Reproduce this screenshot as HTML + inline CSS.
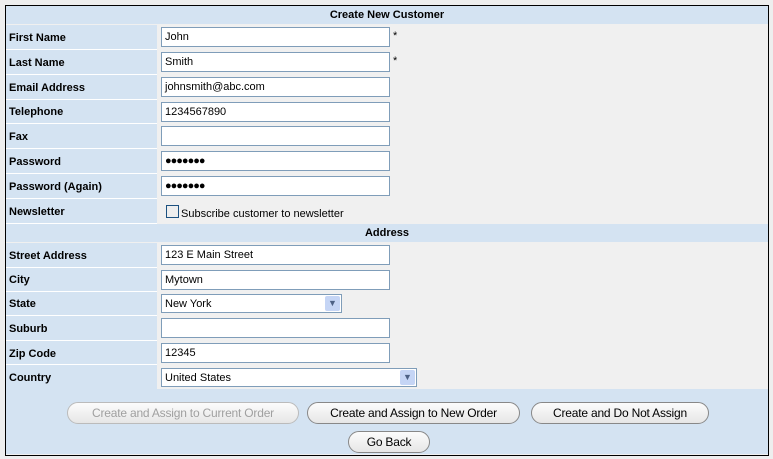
<!DOCTYPE html><html><head><style>
body{margin:0;width:773px;height:459px;background:#eeeeee;font-family:"Liberation Sans",sans-serif;font-size:11px;position:relative;overflow:hidden}
.box{position:absolute;left:5px;top:5px;width:762px;height:449px;border:1px solid #000;background:#f0f0f0}
.h{position:absolute;left:6px;width:762px;background:#d4e3f2;text-align:center;font-weight:bold;height:18px;line-height:19px}
.l{position:absolute;left:6px;width:151px;background:#d4e3f2;font-weight:bold;padding-left:3px;padding-top:1px;box-sizing:border-box;border-bottom:1px solid #fff}
.i{position:absolute;left:161px;width:229px;height:20px;border:1px solid #7f9db9;background:#fff;box-sizing:border-box;padding-left:3px;line-height:19px}
.s{position:absolute;left:161px;border:1px solid #7f9db9;background:#fff;box-sizing:border-box;padding-left:3px;height:19px;line-height:18px}
.ar{position:absolute;right:1px;top:1px;width:15px;height:15px;background:#c5d5f5;border-radius:2px;color:#4d6185;font-size:9px;text-align:center;line-height:15px}
.st{position:absolute;left:393px}
.btn{position:absolute;height:22px;border:1px solid #888;border-radius:11px;background:linear-gradient(#fcfcfc,#e6e6e6);font-size:12px;text-align:center;line-height:21px;box-sizing:border-box;color:#000;letter-spacing:-0.2px}
</style></head><body>
<div class="box"></div>
<div class="h" style="top:6px">Create New Customer</div>
<div class="l" style="top:25px;height:25px;line-height:24px">First Name</div>
<div class="l" style="top:50px;height:25px;line-height:24px">Last Name</div>
<div class="l" style="top:75px;height:25px;line-height:24px">Email Address</div>
<div class="l" style="top:100px;height:24px;line-height:23px">Telephone</div>
<div class="l" style="top:124px;height:25px;line-height:24px">Fax</div>
<div class="l" style="top:149px;height:25px;line-height:24px">Password</div>
<div class="l" style="top:174px;height:25px;line-height:24px">Password (Again)</div>
<div class="l" style="top:199px;height:25px;line-height:24px">Newsletter</div>
<div class="i" style="top:27px">John</div><div class="st" style="top:30px">*</div>
<div class="i" style="top:52px">Smith</div><div class="st" style="top:55px">*</div>
<div class="i" style="top:77px">johnsmith@abc.com</div>
<div class="i" style="top:102px">1234567890</div>
<div class="i" style="top:126px"></div>
<div class="i" style="top:151px;letter-spacing:-1px">●●●●●●●</div>
<div class="i" style="top:176px;letter-spacing:-1px">●●●●●●●</div>
<div style="position:absolute;left:166px;top:205px;width:11px;height:11px;border:1px solid #1c5180;background:#eee"></div>
<div style="position:absolute;left:181px;top:208px">Subscribe customer to newsletter</div>
<div class="h" style="top:224px">Address</div>
<div class="l" style="top:243px;height:25px;line-height:24px">Street Address</div>
<div class="l" style="top:268px;height:24px;line-height:23px">City</div>
<div class="l" style="top:292px;height:24px;line-height:23px">State</div>
<div class="l" style="top:316px;height:25px;line-height:24px">Suburb</div>
<div class="l" style="top:341px;height:24px;line-height:24px">Zip Code</div>
<div class="l" style="top:365px;height:24px;line-height:24px;border-bottom:0">Country</div>
<div class="i" style="top:245px">123 E Main Street</div>
<div class="i" style="top:270px">Mytown</div>
<div class="s" style="top:294px;width:181px">New York<div class="ar">▼</div></div>
<div class="i" style="top:318px"></div>
<div class="i" style="top:343px">12345</div>
<div class="s" style="top:368px;width:256px">United States<div class="ar">▼</div></div>
<div style="position:absolute;left:6px;top:389px;width:762px;height:65px;background:#d4e3f2"></div>
<div class="btn" style="left:67px;top:402px;width:232px;color:#a0a0a0;border-color:#bbb">Create and Assign to Current Order</div>
<div class="btn" style="left:307px;top:402px;width:213px">Create and Assign to New Order</div>
<div class="btn" style="left:531px;top:402px;width:178px">Create and Do Not Assign</div>
<div class="btn" style="left:348px;top:431px;width:82px">Go Back</div>
</body></html>
